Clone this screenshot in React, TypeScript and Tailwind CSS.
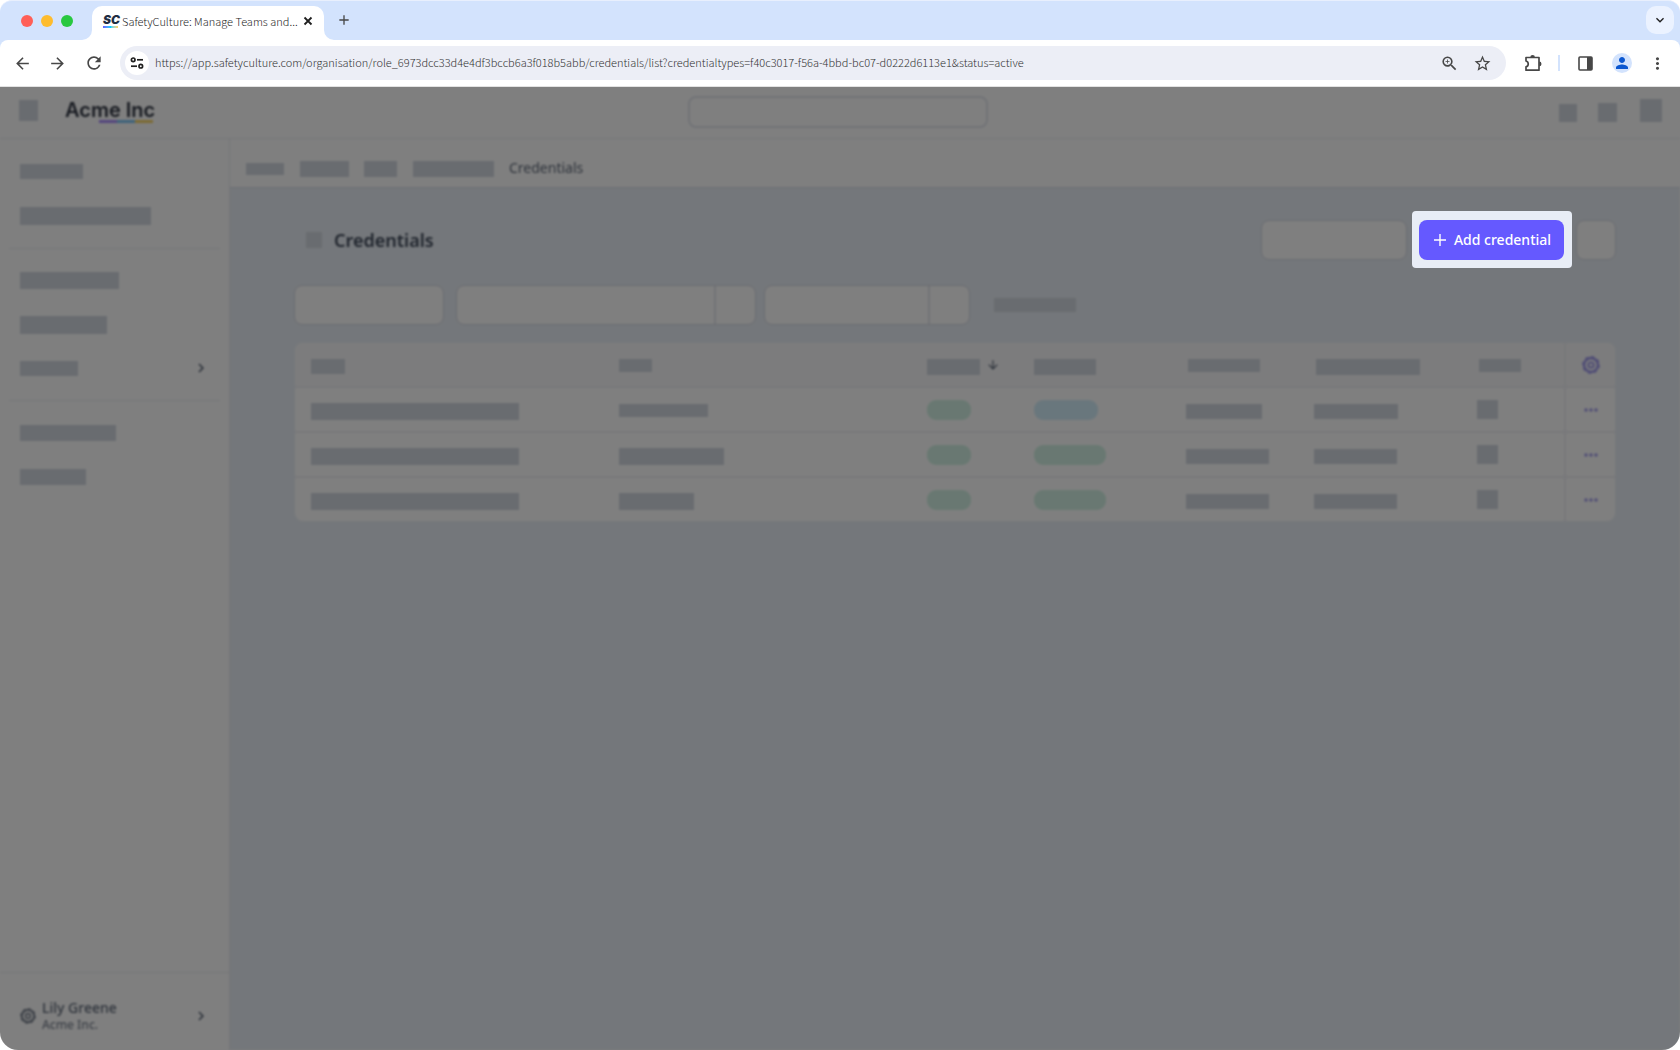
import type { ReactNode } from "react";
import clsx from "clsx";
import {
  MdAdd,
  MdArrowBack,
  MdArrowDownward,
  MdArrowForward,
  MdKeyboardArrowDown,
  MdKeyboardArrowRight,
  MdMoreHoriz,
  MdMoreVert,
  MdPerson,
  MdRefresh,
  MdStarBorder,
  MdZoomIn,
} from "react-icons/md";

const PAGE_URL =
  "https://app.safetyculture.com/organisation/role_6973dcc33d4e4df3bccb6a3f018b5abb/credentials/list?credentialtypes=f40c3017-f56a-4bbd-bc07-d0222d6113e1&status=active";

const BROWSER_FONT = "font-['Noto_Sans_CJK_SC','Noto_Sans',sans-serif] font-light";

const Bar = ({ className }: { className: string }) => (
  <div className={clsx("shrink-0 bg-[#d2d8e0]", className)} />
);

const Pill = ({ className }: { className: string }) => (
  <div className={clsx("h-5 rounded-[9px]", className)} />
);

/* ---------- Browser chrome ---------- */

const TuneIcon = () => (
  <svg viewBox="0 0 14 12" className="h-3 w-3.5" fill="none" stroke="#1f1f1f" strokeWidth="1.7">
    <circle cx="3.2" cy="2.8" r="1.8" />
    <path d="M7 2.8h6" />
    <circle cx="10.8" cy="9.2" r="1.8" />
    <path d="M1 9.2h6" />
  </svg>
);

const CloseIcon = () => (
  <svg viewBox="0 0 10 10" className="h-2.5 w-2.5" stroke="currentColor" strokeWidth="1.8">
    <path d="M1.5 1.5l7 7M8.5 1.5l-7 7" />
  </svg>
);

const PuzzleIcon = () => (
  <svg viewBox="0 0 18 18" className="h-[18px] w-[18px]">
    <path
      d="M2 3.5h13v12.7H2v-3.4c3-.8 3-5 0-5.8z"
      fill="none"
      stroke="#474747"
      strokeWidth="1.7"
      strokeLinejoin="round"
    />
    <path d="M6.3 3.2a2.3 2.3 0 0 1 4.6 0zM15.2 7.6a2.3 2.3 0 0 1 0 4.6z" fill="#474747" />
  </svg>
);

const SidePanelIcon = () => (
  <svg viewBox="0 0 15 15" className="h-[15px] w-[15px]">
    <rect x="1" y="1" width="13" height="13" rx="1" fill="none" stroke="#474747" strokeWidth="1.6" />
    <path d="M9 1h5v13H9z" fill="#474747" />
  </svg>
);

const TabCurve = ({ flip }: { flip?: boolean }) => (
  <svg viewBox="0 0 10 10" className={clsx("h-2.5 w-2.5 self-end", flip && "-scale-x-100")}>
    <path d="M10 0v10H0A10 10 0 0 0 10 0z" fill="#fff" />
  </svg>
);

const TabStrip = () => (
  <div className="flex h-10 items-start rounded-t-xl border-t border-[#e8effd] bg-[#d3e3fd] pr-1.5">
    <div className="ml-[21px] flex h-10 items-center gap-2">
      <span className="h-3 w-3 rounded-full bg-[#ff5f57]" />
      <span className="h-3 w-3 rounded-full bg-[#febc2e]" />
      <span className="h-3 w-3 rounded-full bg-[#28c840]" />
    </div>
    <div className="ml-[9px] flex h-full pt-[5px]">
      <TabCurve />
      <div className="flex w-[232px] items-center rounded-t-[10px] bg-white pr-[11px] pb-1 pl-[11px]">
        <span className="flex w-[17px] flex-col items-start">
          <span className="font-['Inter',sans-serif] text-xs leading-[11px] font-black text-[#1f2d42] italic">SC</span>
          <span className="mt-px h-0.5 w-[15px] bg-linear-to-r from-[#6559ff] via-[#00d1ff] to-[#ffd15c]" />
        </span>
        <span className="ml-0.5 text-[11px] whitespace-nowrap text-[#1f1f1f]">SafetyCulture: Manage Teams and...</span>
        <button aria-label="Close tab" className="ml-auto text-[#1f1f1f]">
          <CloseIcon />
        </button>
      </div>
      <TabCurve flip />
    </div>
    <button aria-label="New tab" className="mt-[11px] ml-0.5 text-[#474747]">
      <MdAdd className="h-4 w-4" />
    </button>
    <button
      aria-label="Search tabs"
      className="mt-[5px] ml-auto flex h-7 w-7 items-center justify-center rounded-[10px] bg-[#ebf2ff] text-[#1f1f1f]"
    >
      <MdKeyboardArrowDown className="h-4 w-4" />
    </button>
  </div>
);

const Toolbar = () => (
  <div className="bg-[#d3e3fd]">
    <div className="flex h-[47px] items-center rounded-t-lg border-b border-[#e2e2e2] bg-white text-[#474747]">
      <button aria-label="Back" className="ml-[13px]">
        <MdArrowBack className="h-[19px] w-[19px]" />
      </button>
      <button aria-label="Forward" className="ml-4">
        <MdArrowForward className="h-[19px] w-[19px]" />
      </button>
      <button aria-label="Reload" className="ml-[17px]">
        <MdRefresh className="h-[20px] w-[20px]" />
      </button>
      <div className="ml-4 flex h-[34px] min-w-0 flex-1 items-center rounded-full bg-[#eceef6] pr-3.5 pl-[5px]">
        <button aria-label="Site information" className="flex h-6 w-6 items-center justify-center rounded-full bg-white">
          <TuneIcon />
        </button>
        <input
          aria-label="Address"
          className="ml-1.5 h-6 min-w-0 flex-1 bg-transparent pb-0.5 text-[11px] text-[#333] outline-none"
          defaultValue={PAGE_URL}
        />
        <button aria-label="Zoom">
          <MdZoomIn className="h-[19px] w-[19px]" />
        </button>
        <button aria-label="Bookmark" className="ml-3.5">
          <MdStarBorder className="h-[19px] w-[19px]" />
        </button>
      </div>
      <button aria-label="Extensions" className="ml-[18px]">
        <PuzzleIcon />
      </button>
      <span className="ml-4 h-4 w-0.5 bg-[#d3e3fd]" />
      <button aria-label="Side panel" className="ml-[18px]">
        <SidePanelIcon />
      </button>
      <button
        aria-label="Profile"
        className="ml-[19px] flex h-5 w-5 items-center justify-center rounded-full bg-[#d3e3fd] text-[#0b57d0]"
      >
        <MdPerson className="h-[18px] w-[18px]" />
      </button>
      <button aria-label="Menu" className="mr-[13px] ml-4">
        <MdMoreVert className="h-[19px] w-[19px]" />
      </button>
    </div>
  </div>
);

/* ---------- App ---------- */

const GearIcon = ({ className }: { className: string }) => (
  <svg viewBox="0 0 16 16" className={className} fill="none" stroke="currentColor">
    <circle cx="8" cy="8" r="6.2" strokeWidth="2.2" />
    <circle cx="8" cy="8" r="2.4" strokeWidth="1.6" />
    <circle cx="8" cy="8" r="7.4" strokeWidth="1" strokeDasharray="2.9 2.9" />
  </svg>
);

const AppHeader = () => (
  <header className="flex h-[52px] items-start justify-between border-b border-[#e9ebf0] pr-[18px] pl-[19px]">
    <div className="flex flex-1">
      <Bar className="mt-[13px] h-[21px] w-[19px]" />
      <div className="mt-[11px] ml-[27px]">
        <div className="font-['Inter',sans-serif] text-xl leading-6 font-semibold text-[#2f3542]">Acme Inc</div>
        <div className="-mt-0.5 mr-0.5 ml-auto flex h-[3px] w-[54px]">
          <span className="flex-1 bg-[#a78bfa]" />
          <span className="flex-1 bg-[#7dc4f5]" />
          <span className="flex-1 bg-[#f8d568]" />
        </div>
      </div>
    </div>
    <input aria-label="Search" className="mt-[9px] mr-[5px] h-8 w-[300px] rounded-lg border-2 border-[#e3e6ee]" />
    <div className="flex flex-1 items-end justify-end">
      <Bar className="h-[18px] w-[18px]" />
      <Bar className="ml-[21px] h-[19px] w-[19px]" />
      <Bar className="mt-3 ml-[23px] h-[23px] w-[22px]" />
    </div>
  </header>
);

const NavGroup = ({ children }: { children: ReactNode }) => (
  <div className="mx-[9px] flex flex-col border-b border-[#e9ebf0] pl-[11px] last:border-b-0">{children}</div>
);

const Sidebar = () => (
  <aside className="flex w-[230px] shrink-0 flex-col border-r border-[#e9ebf0]">
    <nav className="flex-1">
      <NavGroup>
        <Bar className="mt-[25px] h-[15px] w-[63px]" />
        <Bar className="mt-7 mb-[23px] h-[18px] w-[131px]" />
      </NavGroup>
      <NavGroup>
        <Bar className="mt-[23px] h-[17px] w-[99px]" />
        <Bar className="mt-[27px] h-[18px] w-[87px]" />
        <div className="mt-[25px] mb-[23px] flex h-[18px] items-center justify-between pr-2.5">
          <Bar className="h-[15px] w-[58px]" />
          <MdKeyboardArrowRight className="h-[18px] w-[18px] text-[#545f70]" />
        </div>
      </NavGroup>
      <NavGroup>
        <Bar className="mt-6 h-4 w-24" />
        <Bar className="mt-7 h-4 w-[66px]" />
      </NavGroup>
    </nav>
    <div className="flex h-[78px] items-center border-t border-[#e9ebf0] pt-2 pr-[19px] pl-5">
      <GearIcon className="h-4 w-4 text-[#7d8592]" />
      <div className="ml-1.5 flex-1">
        <div className="text-sm leading-[18px] font-medium text-[#5e6878]">Lily Greene</div>
        <div className="text-xs leading-4 font-medium text-[#7d8592]">Acme Inc.</div>
      </div>
      <MdKeyboardArrowRight className="h-[18px] w-[18px] text-[#545f70]" />
    </div>
  </aside>
);

const columns = [
  { width: "w-[308px]", bar: "mt-1 h-[15px] w-[34px]" },
  { width: "w-[308px]", bar: "mt-0.5 h-[13px] w-[33px]" },
  { width: "w-[107px]", bar: "mt-1 h-4 w-[53px]", sorted: true },
  { width: "w-[152px]", bar: "mt-1 h-4 w-[62px]" },
  { width: "w-[128px]", bar: "mt-0.5 ml-0.5 h-[13px] w-[72px]" },
  { width: "w-[163px]", bar: "mt-1 ml-0.5 h-4 w-[104px]" },
  { width: "w-[104px]", bar: "mt-0.5 ml-0.5 h-[13px] w-[42px]" },
];

const rows = [
  {
    name: "w-[208px]",
    type: "mt-0.5 h-[13px] w-[89px]",
    approval: "w-[64px] bg-[#d3eefa]",
    from: "w-[76px]",
    to: "w-[84px]",
  },
  {
    name: "w-[208px]",
    type: "mt-1 h-[17px] w-[105px]",
    approval: "w-[72px] bg-[#d2f1e4]",
    from: "w-[83px]",
    to: "w-[83px]",
  },
  {
    name: "w-[208px]",
    type: "mt-1 h-[17px] w-[75px]",
    approval: "w-[72px] bg-[#d2f1e4]",
    from: "w-[83px]",
    to: "w-[83px]",
  },
];

const CredentialsTable = () => (
  <div className="mt-[18px] overflow-hidden rounded-lg bg-white">
    <table className="w-full table-fixed">
      <thead className="bg-[#f9f9fb]">
        <tr className="h-11 border-b-2 border-[#eff0f5]">
          {columns.map((column, index) => (
            <th key={index} scope="col" className={clsx("p-0 pl-4", column.width)}>
              <div className="flex items-center">
                <Bar className={column.bar} />
                {column.sorted && <MdArrowDownward className="ml-1.5 h-3.5 w-3.5 text-[#545f70]" />}
              </div>
            </th>
          ))}
          <th scope="col" className="w-[50px] border-l-2 border-[#eff0f5] p-0">
            <button aria-label="Table settings" className="flex w-full justify-center">
              <GearIcon className="h-[18px] w-[18px] text-[#9d97ea]" />
            </button>
          </th>
        </tr>
      </thead>
      <tbody>
        {rows.map((row, index) => (
          <tr key={index} className="h-[45px] border-b-2 border-[#eff0f5] last:h-11 last:border-b-0">
            <td className="p-0 pl-4">
              <Bar className={clsx("mt-1 h-[17px]", row.name)} />
            </td>
            <td className="p-0 pl-4">
              <Bar className={row.type} />
            </td>
            <td className="p-0 pl-4">
              <Pill className="w-11 bg-[#d2f1e4]" />
            </td>
            <td className="p-0 pl-4">
              <Pill className={row.approval} />
            </td>
            <td className="p-0 pl-4">
              <Bar className={clsx("mt-1 h-[15px]", row.from)} />
            </td>
            <td className="p-0 pl-4">
              <Bar className={clsx("mt-1 h-[15px]", row.to)} />
            </td>
            <td className="p-0 pl-4">
              <Bar className="h-[19px] w-[21px]" />
            </td>
            <td className="border-l-2 border-[#eff0f5] p-0">
              <button aria-label="Row actions" className="flex w-full justify-center text-[#9d97ea]">
                <MdMoreHoriz className="h-5 w-5" />
              </button>
            </td>
          </tr>
        ))}
      </tbody>
    </table>
  </div>
);

const boxStyle = "rounded-lg border border-[#d3d7e2] bg-white";

const Credentials = () => (
  <main className="min-w-0 flex-1 bg-[#e9eff6]">
    <div className="flex h-[49px] items-center border-b border-[#d9dde6] bg-white pt-3 pl-4">
      <Bar className="h-3 w-[38px]" />
      <Bar className="ml-4 h-4 w-[49px]" />
      <Bar className="ml-[15px] h-4 w-[33px]" />
      <Bar className="ml-4 h-4 w-[81px]" />
      <span className="ml-[15px] pb-0.5 text-sm leading-4 text-[#5e6878]">Credentials</span>
    </div>
    <div className="px-16 pt-8">
      <div className="flex h-10 items-center">
        <Bar className="ml-3 h-4 w-4" />
        <h1 className="ml-3 text-lg font-semibold text-[#3f495a]">Credentials</h1>
        <div className={clsx("mr-[169px] ml-auto h-10 w-[146px]", boxStyle)} />
        <div className={clsx("h-10 w-10", boxStyle)} />
      </div>
      <div className="mt-[25px] flex h-10 items-center">
        <div className={clsx("h-10 w-[150px]", boxStyle)} />
        <div className={clsx("ml-3 flex h-10 w-[300px] justify-end", boxStyle)}>
          <div className="w-[41px] border-l-2 border-[#e3e6ee]" />
        </div>
        <div className={clsx("ml-2 flex h-10 w-[206px] justify-end", boxStyle)}>
          <div className="w-[41px] border-l-2 border-[#e3e6ee]" />
        </div>
        <Bar className="ml-6 h-3.5 w-[82px]" />
      </div>
      <div className="px-px">
        <CredentialsTable />
      </div>
    </div>
  </main>
);

const App = () => {
  return (
    <div className="flex min-h-screen flex-col bg-white font-['Noto_Sans',sans-serif]">
      <div className={BROWSER_FONT}>
        <TabStrip />
        <Toolbar />
      </div>

      <div className="relative flex flex-1 flex-col overflow-hidden rounded-b-[18px]">
        <div className="flex flex-1 flex-col bg-white blur-[1px]">
          <AppHeader />
          <div className="flex flex-1">
            <Sidebar />
            <Credentials />
          </div>
        </div>

        {/* Dimmed backdrop with the highlighted action on top */}
        <div className="absolute inset-0 bg-black/50" />
        <div className="absolute top-[124px] right-[108px] rounded-sm bg-[#e8edf6] pt-[9px] pr-2 pb-2 pl-[7px]">
          <button className="flex h-10 w-[145px] items-center justify-center gap-2 rounded-lg bg-[#6559ff] pl-0.5 text-sm font-medium text-white">
            <svg viewBox="0 0 12 12" className="h-3 w-3" stroke="currentColor" strokeWidth="1.4">
              <path d="M6 0v12M0 6h12" />
            </svg>
            Add credential
          </button>
        </div>
      </div>
    </div>
  );
};

export default App;
